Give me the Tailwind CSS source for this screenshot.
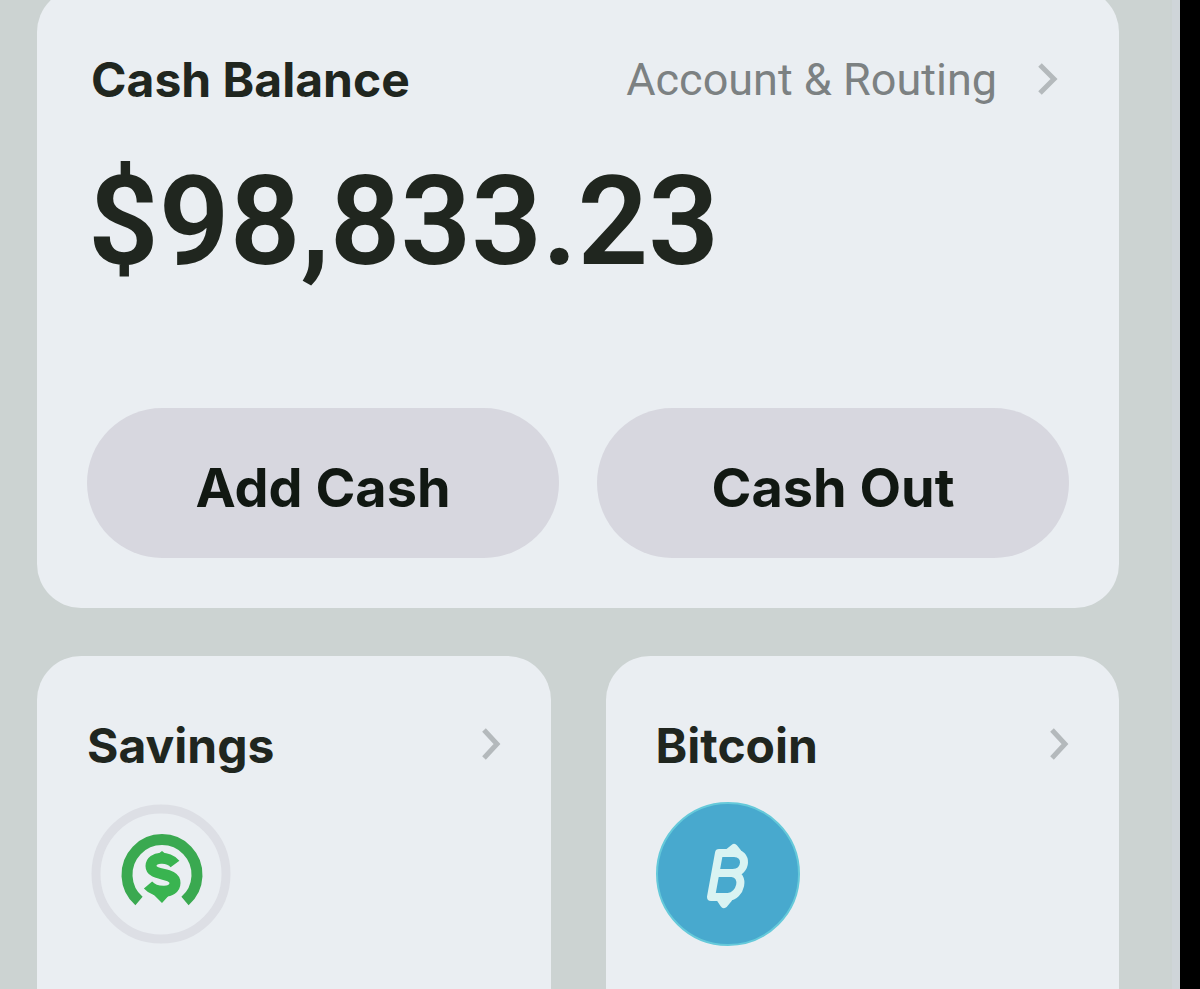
<!DOCTYPE html>
<html lang="en">
<head>
<meta charset="utf-8">
<meta name="viewport" content="width=device-width, initial-scale=1">
<title>Cash Balance</title>
<script src="https://cdn.jsdelivr.net/npm/@tailwindcss/browser@4"></script>
</head>
<body class="bg-black pr-5 font-[Inter,sans-serif] text-[#20261f]">
<main class="flex h-screen flex-col gap-12 overflow-hidden border-r-8 border-[#cfd5d9] bg-[#ccd3d2] pr-[53px] pl-[37px]">
  <section class="-mt-3 rounded-[44px] bg-[#eaeef2] px-[50px] pt-12 pb-[50px]">
    <div class="flex items-center justify-between pt-3 pr-2 pl-1">
      <h1 class="text-5xl leading-[62px] font-bold">Cash Balance</h1>
      <a href="#" class="flex items-center gap-10 font-[Roboto,sans-serif] text-[45px] leading-[64px] text-[#7c8182]">Account &amp; Routing
        <svg class="h-9 w-6 text-[#b4b9bc]" viewBox="0 0 24 36" fill="none" stroke="currentColor" stroke-width="5" aria-hidden="true"><path d="M3 3l14 14L3 31"/></svg>
      </a>
    </div>
    <p class="mt-9 pl-px font-[Roboto,sans-serif] text-[124px] leading-[148px] font-semibold">$98,833.23</p>
    <div class="mt-28 grid grid-cols-2 gap-[38px]">
      <button class="h-[150px] rounded-full bg-[#d7d7df] pt-2 text-[54px] font-bold text-[#111812]">Add Cash</button>
      <button class="h-[150px] rounded-full bg-[#d7d7df] pt-2 text-[54px] font-bold text-[#111812]">Cash Out</button>
    </div>
  </section>
  <div class="grid grow grid-cols-2 gap-[55px]">
    <section class="rounded-t-[44px] bg-[#eaeef2] px-[50px] pt-[58px]">
      <a href="#" class="flex items-center justify-between"><h2 class="text-5xl leading-[64px] font-bold">Savings</h2>
        <svg class="h-9 w-6 text-[#b4b9bc]" viewBox="0 0 24 36" fill="none" stroke="currentColor" stroke-width="5" aria-hidden="true"><path d="M7 2l13 14L7 30"/></svg>
      </a>
      <svg class="mt-6 h-36 w-36" viewBox="0 0 144 144" fill="none" aria-hidden="true">
        <circle cx="74" cy="72" r="65" stroke="#dddfe5" stroke-width="9"/>
        <path d="M52 99A35 35 0 1 1 98 99" stroke="#3aa950" stroke-width="11"/>
        <path d="M88 62C82 54 64 54 64 64C64 75 88 69 88 81C88 92 68 91 61 83" stroke="#39b450" stroke-width="11"/>
        <path d="M65 57l10-8 10 8zM64 90h21l-10 11z" fill="#39b450"/>
      </svg>
    </section>
    <section class="rounded-t-[44px] bg-[#eaeef2] px-[50px] pt-[58px]">
      <a href="#" class="flex items-center justify-between"><h2 class="text-5xl leading-[64px] font-bold">Bitcoin</h2>
        <svg class="h-9 w-6 text-[#b4b9bc]" viewBox="0 0 24 36" fill="none" stroke="currentColor" stroke-width="5" aria-hidden="true"><path d="M7 2l13 14L7 30"/></svg>
      </a>
      <svg class="mt-6 h-36 w-36" viewBox="0 0 144 144" fill="none" aria-hidden="true">
        <circle cx="72" cy="72" r="71" fill="#48a9ce" stroke="#65c9da" stroke-width="2"/>
        <g stroke="#d9f3f2" stroke-width="8" stroke-linejoin="round">
          <path d="M63 51h15c14 0 13 19-1 20h-13h12c14 2 9 23-4 24H55z"/>
          <path d="M73 50l5-4 4 5M64 96l4 6 5-6"/>
        </g>
      </svg>
    </section>
  </div>
</main>
</body>
</html>
